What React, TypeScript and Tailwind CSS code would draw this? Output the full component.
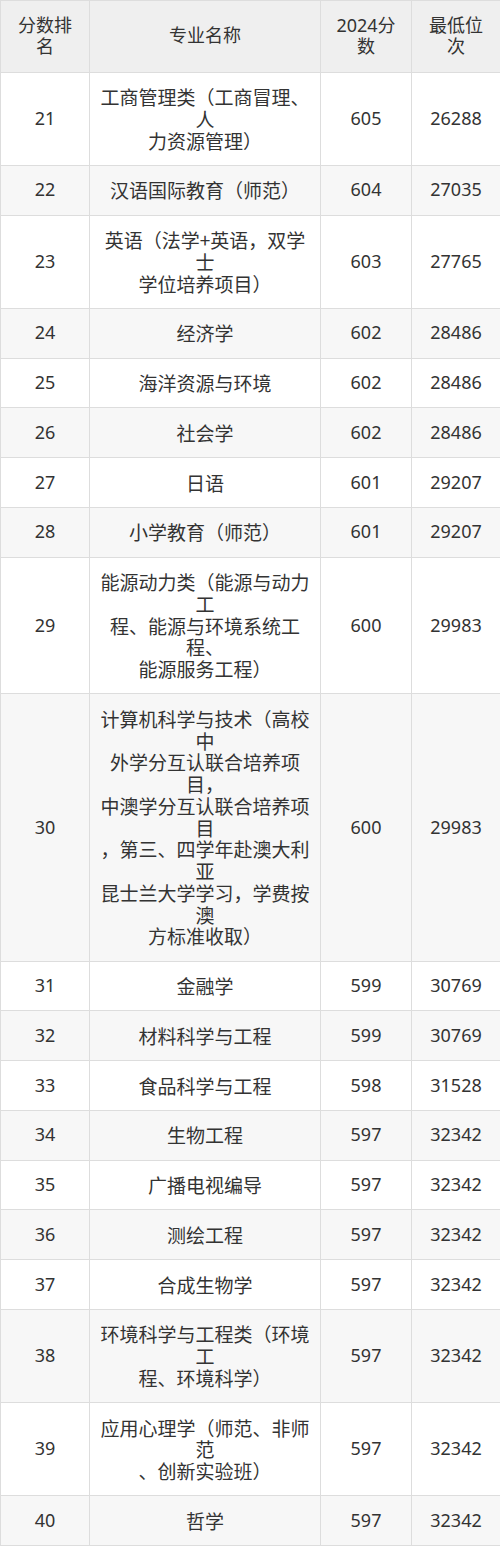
const rows: [string, string[], string, string][] = [
  ['21', ['工商管理类（工商冒理、', '人', '力资源管理）'], '605', '26288'],
  ['22', ['汉语国际教育（师范）'], '604', '27035'],
  ['23', ['英语（法学+英语，双学', '士', '学位培养项目）'], '603', '27765'],
  ['24', ['经济学'], '602', '28486'],
  ['25', ['海洋资源与环境'], '602', '28486'],
  ['26', ['社会学'], '602', '28486'],
  ['27', ['日语'], '601', '29207'],
  ['28', ['小学教育（师范）'], '601', '29207'],
  ['29', ['能源动力类（能源与动力', '工', '程、能源与环境系统工', '程、', '能源服务工程）'], '600', '29983'],
  [
    '30',
    [
      '计算机科学与技术（高校',
      '中',
      '外学分互认联合培养项',
      '目，',
      '中澳学分互认联合培养项',
      '目',
      '，第三、四学年赴澳大利',
      '亚',
      '昆士兰大学学习，学费按',
      '澳',
      '方标准收取）',
    ],
    '600',
    '29983',
  ],
  ['31', ['金融学'], '599', '30769'],
  ['32', ['材料科学与工程'], '599', '30769'],
  ['33', ['食品科学与工程'], '598', '31528'],
  ['34', ['生物工程'], '597', '32342'],
  ['35', ['广播电视编导'], '597', '32342'],
  ['36', ['测绘工程'], '597', '32342'],
  ['37', ['合成生物学'], '597', '32342'],
  ['38', ['环境科学与工程类（环境', '工', '程、环境科学）'], '597', '32342'],
  ['39', ['应用心理学（师范、非师', '范', '、创新实验班）'], '597', '32342'],
  ['40', ['哲学'], '597', '32342'],
];

function Lines({ lines }: { lines: string[] }) {
  return (
    <>
      {lines.map((l, i) => (
        <div key={i}>{l}</div>
      ))}
    </>
  );
}

const cell = 'border border-[#dddddd] px-1 py-[13.5px] text-center align-middle';
const cjk = "font-['Noto_Sans_CJK_SC',sans-serif] text-[19px] [text-spacing-trim:space-all]";

export default function App() {
  return (
    <div className="w-[500px] bg-white font-['Noto_Sans','Noto_Sans_CJK_SC',sans-serif] text-[18px] leading-[21.75px] text-[#333333]">
      <table className="w-[500px] table-fixed border-collapse">
        <colgroup>
          <col className="w-[89px]" />
          <col className="w-[231px]" />
          <col className="w-[91px]" />
          <col className="w-[89px]" />
        </colgroup>
        <thead>
          <tr className="bg-[#efefef]">
            <th className={`${cell} font-normal`}>
              <Lines lines={['分数排', '名']} />
            </th>
            <th className={`${cell} font-normal`}>专业名称</th>
            <th className={`${cell} font-normal`}>
              <Lines lines={['2024分', '数']} />
            </th>
            <th className={`${cell} font-normal`}>
              <Lines lines={['最低位', '次']} />
            </th>
          </tr>
        </thead>
        <tbody>
          {rows.map(([rank, name, score, pos], i) => (
            <tr key={rank} className={i % 2 === 0 ? 'bg-white' : 'bg-[#f7f7f7]'}>
              <td className={cell}>{rank}</td>
              <td className={`${cell} ${cjk}`}>
                <Lines lines={name} />
              </td>
              <td className={cell}>{score}</td>
              <td className={cell}>{pos}</td>
            </tr>
          ))}
        </tbody>
      </table>
    </div>
  );
}
